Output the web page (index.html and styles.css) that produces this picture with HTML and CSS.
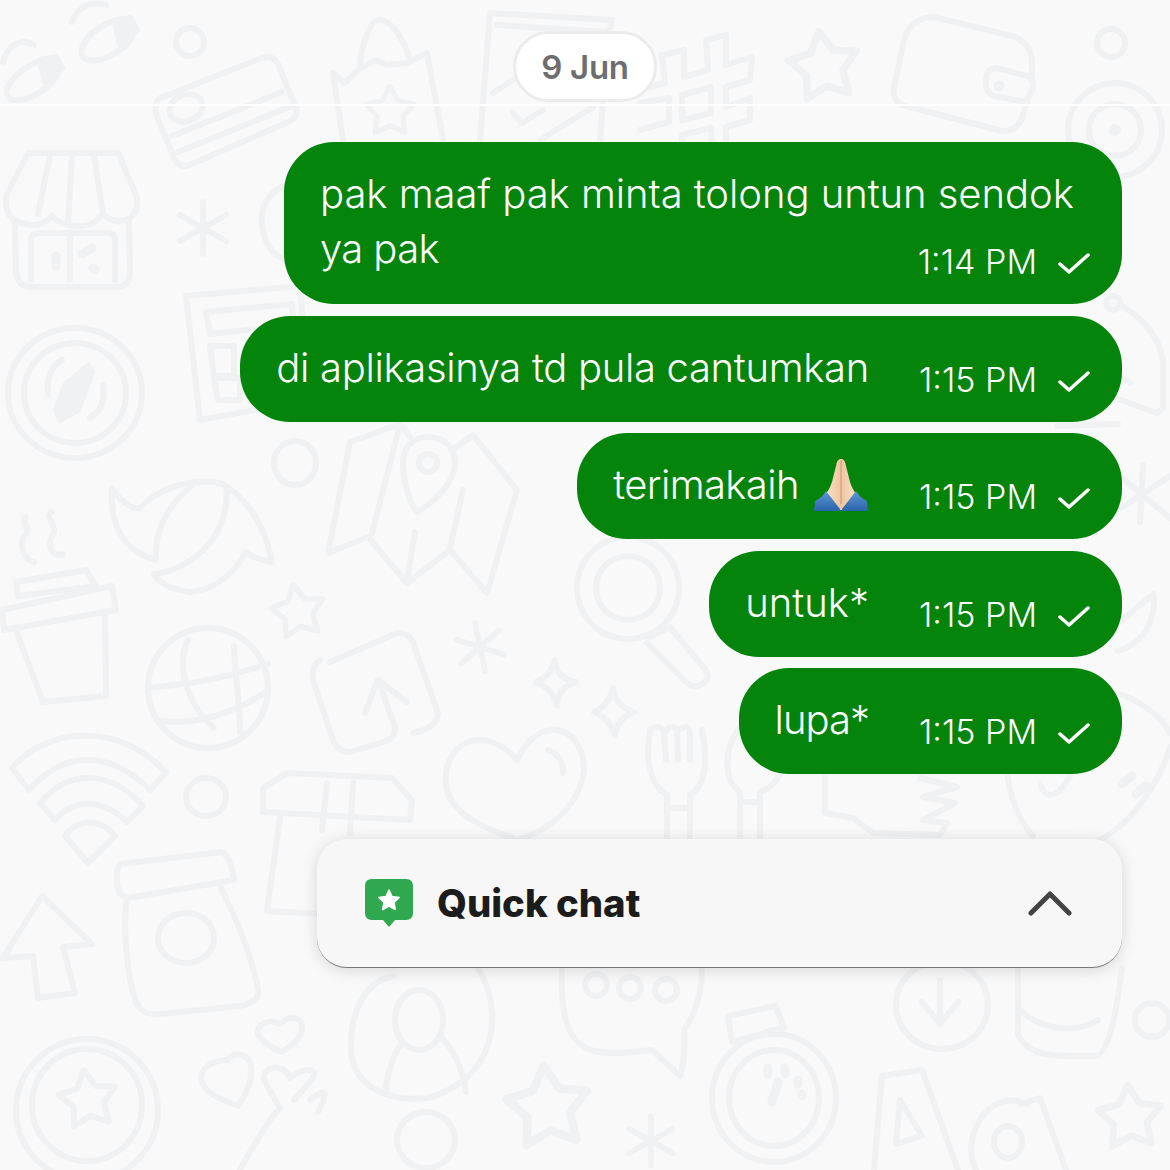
FILE: index.html
```html
<!DOCTYPE html>
<html lang="id">
<head>
<meta charset="utf-8">
<title>Chat</title>
<link rel="stylesheet" href="styles.css">
</head>
<body>
<div class="screen">
  <svg class="wallpaper" viewBox="0 0 1170 1170" aria-hidden="true">
    <defs>
      <path id="star" d="M0-30 9.4-12.9 28.5-9.3 15.2 5 17.6 24.3 0 16-17.6 24.3-15.2 5-28.5-9.3-9.4-12.9Z"/>
      <path id="aster" d="M0-26V26M-23-13 23 13M-23 13 23-13"/>
    </defs>
    <!-- top row -->
    <ellipse cx="33" cy="80" rx="30" ry="14" transform="rotate(-33 33 80)"/>
    <path class="solid" d="M40 60 56 57 62 68 45 82Z"/>
    <path d="M3 62C8 44 22 38 34 45"/>
    <ellipse cx="108" cy="40" rx="30" ry="15" transform="rotate(-33 108 40)"/>
    <path class="solid" d="M115 22 130 18 137 30 120 44Z"/>
    <path d="M72 22C78 6 92 0 106 5"/>
    <circle cx="190" cy="42" r="14"/>
    <path d="M160 98 262 58Q272 54 278 64L296 108Q298 118 288 122L192 164Q180 170 174 158L156 114Q154 102 160 98Z"/>
    <path d="M172 136 282 92M178 152 292 106"/>
    <ellipse cx="186" cy="108" rx="17" ry="13" transform="rotate(-22 186 108)"/>
    <path d="M360 65C362 40 372 18 380 20 392 20 404 40 410 60"/>
    <path d="M333 73 345 83 358 70 375 60 387 65 407 63 427 53 443 140M333 73 343 140"/>
    <use href="#star" transform="translate(390 112) scale(.85)"/>
    <path d="M490 13 612 20 608 37 600 140M490 13 480 140M497 25 607 32M493 93 523 73M513 113 522 123 543 110M540 140 593 107"/>
    <path d="M662 55 684 50V77L708 70 706 40 726 35V65L752 57 750 80 726 87V107L750 98V120L726 127V143M662 55 665 83 640 90M640 103 669 98V122L640 130"/>
    <path d="M682 95 711 87V113L682 120ZM682 143V135L711 128 712 143"/>
    <use href="#star" transform="translate(824 67) scale(1.2) rotate(-8)"/>
    <path d="M934 17C918 17 908 26 904 40L894 88Q892 100 902 105L1002 131Q1016 132 1022 118L1027 102M934 17 1012 36Q1030 42 1032 60V76"/>
    <path d="M996 68 1028 76Q1036 82 1032 90L1026 102 994 96Q984 92 986 78 988 68 996 68Z"/>
    <circle class="solid" cx="999" cy="86" r="2.5"/>
    <circle cx="1111" cy="43" r="14"/>
    <circle cx="1115" cy="130" r="47"/>
    <circle cx="1115" cy="130" r="26"/>
    <circle class="solid" cx="1115" cy="130" r="3"/>
    <!-- left column -->
    <path d="M28 153H118L136 195Q140 210 130 218 116 226 103 214 92 228 76 226 62 226 52 216 42 228 24 224 4 220 6 196Z"/>
    <path d="M50 155 38 214M72 155 68 224M94 155 103 214"/>
    <path d="M15 224 16 272Q18 287 32 287H116Q130 287 130 272L129 222"/>
    <path d="M31 280V240Q31 233 40 233H108Q115 233 115 240V280M70 234V280"/>
    <path class="solid-line" d="M56 256V266M82 254 92 248M93 268 95 270"/>
    <use href="#aster" transform="translate(203 228)"/>
    <path d="M290 184C268 190 260 208 262 224 264 244 274 258 292 262"/>
    <path d="M186 296 300 286 310 400 200 420Z"/>
    <path d="M206 312 292 304 294 325 210 334ZM210 346H234V376H214ZM214 378H240V400H218Z"/>
    <ellipse cx="75" cy="393" rx="67" ry="65"/>
    <ellipse cx="75" cy="393" rx="51" ry="50"/>
    <path d="M62 360C52 365 46 378 48 394M103 385C106 400 100 412 90 418"/>
    <path class="solid" d="M88 366 92 372 78 410 60 420 56 410 66 384Z"/>
    <ellipse cx="295" cy="463" rx="21" ry="22"/>
    <path d="M112 488C124 506 136 510 140 508 150 496 172 484 196 482 220 480 226 486 226 486 256 506 268 540 272 562 260 560 250 556 246 552 236 570 218 590 190 592 176 590 160 586 154 574 174 572 200 560 216 534 226 516 228 496 226 486M112 490C110 530 126 552 156 560 154 530 168 504 196 482"/>
    <path d="M26 517C18 520 34 528 24 536 18 544 24 560 34 562M52 512C42 516 60 526 52 536 46 548 54 558 63 554"/>
    <path d="M16 582 86 570 96 586 18 596ZM2 610 112 586 116 610 4 630Z"/>
    <path d="M16 630 43 702 106 696 105 612"/>
    <use href="#star" transform="translate(298 612) scale(.92) rotate(-10)"/>
    <ellipse cx="208" cy="688" rx="60" ry="60"/>
    <path d="M150 688 182 684C206 682 236 674 268 664M156 720C190 726 230 716 266 692M188 640C176 664 186 704 214 728M234 646C234 668 240 700 240 732"/>
    <path d="M12 768C50 724 124 724 166 773L150 790C110 750 64 750 29 790ZM40 803C70 768 110 770 143 806L127 822C104 800 76 796 55 820ZM65 836C78 818 100 818 115 836L88 863Z"/>
    <ellipse cx="206" cy="797" rx="20" ry="19"/>
    <path d="M120 864 222 852Q230 856 234 880L128 898Q117 896 117 880 117 866 120 864Z"/>
    <path d="M127 898C122 930 128 980 136 1002 140 1012 150 1015 160 1014L240 1006C256 1002 260 996 258 988 250 950 236 918 221 888"/>
    <ellipse cx="186" cy="938" rx="28" ry="25"/>
    <path d="M42 896 3 958 33 956 38 998 75 993 63 947 92 944Z"/>
    <ellipse cx="87" cy="1110" rx="71" ry="71"/>
    <ellipse cx="87" cy="1105" rx="55" ry="56"/>
    <use href="#star" transform="translate(88 1100) rotate(-8)"/>
    <path d="M228 1060C214 1060 198 1068 202 1082 206 1094 222 1100 238 1106 248 1092 254 1076 250 1062 244 1052 232 1052 228 1060ZM280 1024C270 1018 256 1024 258 1034 262 1042 272 1048 282 1052 294 1044 304 1036 302 1024 298 1016 288 1016 280 1024Z"/>
    <path d="M240 1170C256 1140 272 1116 280 1108L264 1080C262 1068 280 1060 290 1078 304 1066 322 1068 310 1082L294 1100M310 1100C326 1088 330 1090 318 1112"/>
    <!-- middle -->
    <path d="M350 442 400 424 410 437M350 442 328 553 368 537 407 583 450 550 487 593 517 490 473 435 455 448M400 425 372 533M415 532 407 580M463 490 450 548"/>
    <path d="M417 512C408 500 403 480 403 463 403 446 414 437 428 437 444 437 455 448 455 463 455 480 438 500 417 512Z"/>
    <circle cx="428" cy="463" r="9"/>
    <circle cx="628" cy="588" r="51"/>
    <circle cx="628" cy="588" r="32"/>
    <path d="M670 627 704 668Q712 678 702 684 692 690 684 680L647 643M650 637 670 627"/>
    <path d="M330 662 397 633Q408 632 413 642L438 713Q438 728 413 733M320 660C312 666 312 672 313 680L333 740Q338 752 350 752L383 742Q396 738 395 727L378 680"/>
    <path d="M365 713 378 680 407 702"/>
    <use href="#aster" transform="translate(480 647) rotate(-12) scale(.95)"/>
    <path d="M555 660C556 672 562 680 576 682 564 686 558 692 557 706 554 694 546 686 536 682 546 678 552 672 555 660ZM613 688C614 700 622 708 634 712 624 716 616 724 615 736 612 724 604 716 594 712 604 708 610 700 613 688Z"/>
    <path d="M517 760C504 744 484 736 468 742 448 750 442 774 448 794 458 818 490 830 517 840 552 830 580 804 584 770 584 748 572 730 553 730 536 730 524 746 517 760ZM548 750C556 752 564 762 563 773"/>
    <path d="M650 730C645 760 650 785 667 795V840M690 795C706 785 708 760 702 730M650 730Q662 722 664 735L666 760M664 735Q670 722 677 730L678 760M678 730Q690 722 690 735V760M667 808H690M690 795V840"/>
    <path d="M742 725C724 745 722 780 740 792V838M760 792C772 788 778 780 782 770M740 802H760M760 792V838"/>
    <path d="M263 788 287 773 392 778 412 800 410 820 263 812ZM327 783 322 830M353 783 350 833M280 817 267 911 360 916"/>
    <!-- right / lower -->
    <path d="M825 777V813L853 818 873 833 940 835 947 823 923 820 955 803 923 797 957 787 920 778"/>
    <path d="M1007 772C1010 796 1018 820 1033 836M1040 783C1044 796 1054 804 1070 776"/>
    <path d="M1120 694C1146 704 1164 720 1170 733M1170 747C1160 780 1136 820 1100 840"/>
    <path class="solid-line" d="M1122 784 1132 776M1136 794 1146 786"/>
    <circle cx="1113" cy="303" r="7"/>
    <path d="M1122 306C1146 320 1160 340 1163 361L1163 408 1157 413 1113 397M1130 383 1118 376M1057 426 1118 424"/>
    <path d="M1143 465 1140 522M1170 476 1118 510M1170 518 1122 478"/>
    <path d="M1120 622 1153 594C1156 610 1150 622 1147 629 1140 640 1130 648 1117 651"/>
    <path d="M394 976C366 980 350 1010 351 1050 354 1090 392 1102 428 1098 476 1084 494 1050 492 1010 490 990 484 978 478 968"/>
    <ellipse cx="419" cy="1020" rx="24" ry="30"/>
    <path d="M400 1046C390 1060 386 1084 386 1090M440 1036C458 1054 464 1078 466 1092"/>
    <ellipse cx="426" cy="1140" rx="29" ry="28"/>
    <path d="M562 968C560 1010 566 1040 590 1050 612 1056 630 1052 652 1050L680 1076C686 1060 684 1036 684 1030 698 1010 702 990 702 968"/>
    <ellipse cx="596" cy="985" rx="11" ry="11"/>
    <ellipse cx="630" cy="988" rx="11" ry="11"/>
    <ellipse cx="666" cy="990" rx="11" ry="11"/>
    <use href="#star" transform="translate(548 1108) scale(1.42) rotate(-6)"/>
    <use href="#aster" transform="translate(651 1141) scale(.95)"/>
    <ellipse cx="774" cy="1098" rx="62" ry="64"/>
    <ellipse cx="774" cy="1098" rx="45" ry="48"/>
    <path d="M728 1016 776 1006 784 1028 732 1042ZM744 1040 772 1030"/>
    <path class="solid-line" d="M768 1068V1074M785 1068V1074M798 1080V1084M802 1094V1096M778 1082C776 1094 772 1098 772 1102"/>
    <path d="M874 1170 882 1076 922 1070 958 1170M900 1100 896 1144 922 1136Z"/>
    <path d="M1028 1104C1004 1094 980 1106 972 1140 970 1152 972 1162 976 1170M1020 1104 1040 1098 1066 1170"/>
    <ellipse cx="1008" cy="1142" rx="14" ry="16"/>
    <use href="#star" transform="translate(1130 1118) scale(1.1) rotate(-4)"/>
    <ellipse cx="942" cy="1005" rx="46" ry="44"/>
    <path d="M940 980V1020M922 1002 940 1024 958 1002"/>
    <path d="M1018 968V1035C1030 1058 1054 1056 1096 1056 1110 1054 1118 1000 1122 968M1020 1010C1040 1030 1076 1034 1098 1020"/>
    <circle cx="1152" cy="1020" r="17"/>
  </svg>

  <main class="chat">
    <div class="date-row"><span class="date-pill">9 Jun</span></div>
    <div class="divider"></div>

    <div class="messages">
      <article class="bubble bubble--long">
        <p class="text text--fine">pak maaf pak minta tolong untun sendok</p>
        <div class="last-row">
          <p class="text text--tight">ya pak</p>
          <div class="meta"><time class="time">1:14 PM</time>
            <svg class="check" viewBox="0 0 32 24"><path d="M2 12 11 20 30 3"/></svg></div>
        </div>
      </article>

      <article class="bubble">
        <p class="text text--snug">di aplikasinya td pula cantumkan</p>
        <div class="meta"><time class="time">1:15 PM</time>
          <svg class="check" viewBox="0 0 32 24"><path d="M2 12 11 20 30 3"/></svg></div>
      </article>

      <article class="bubble">
        <p class="text text--emoji"><span class="text--tight">terimakaih</span>
          <svg class="emoji" viewBox="0 0 56 54" role="img" aria-label="🙏">
            <defs>
              <linearGradient id="sleeve" x1="0" y1="0" x2="0" y2="1">
                <stop offset="0" stop-color="#5f97d4"/>
                <stop offset="1" stop-color="#2a64ad"/>
              </linearGradient>
              <linearGradient id="skin" x1="0" y1="0" x2="1" y2="0">
                <stop offset="0" stop-color="#fbe3cb"/>
                <stop offset=".5" stop-color="#eec5a0"/>
                <stop offset="1" stop-color="#fbe3cb"/>
              </linearGradient>
            </defs>
            <path class="emoji-skin" d="M28 1C25 1 24 3 23 8L19 24C17 30 15 33 12 37L26 52H30L44 37C41 33 39 30 37 24L33 8C32 3 31 1 28 1Z"/>
            <path class="emoji-line" d="M28 3V46"/>
            <path class="emoji-sleeve" d="M1 53 2 43Q9 40 13 33L27 51V53ZM55 53 54 43Q47 40 43 33L29 51V53Z"/>
          </svg>
        </p>
        <div class="meta"><time class="time">1:15 PM</time>
          <svg class="check" viewBox="0 0 32 24"><path d="M2 12 11 20 30 3"/></svg></div>
      </article>

      <article class="bubble">
        <p class="text">untuk*</p>
        <div class="meta"><time class="time">1:15 PM</time>
          <svg class="check" viewBox="0 0 32 24"><path d="M2 12 11 20 30 3"/></svg></div>
      </article>

      <article class="bubble">
        <p class="text text--narrow">lupa*</p>
        <div class="meta"><time class="time">1:15 PM</time>
          <svg class="check" viewBox="0 0 32 24"><path d="M2 12 11 20 30 3"/></svg></div>
      </article>
    </div>

    <section class="quick-chat">
      <svg class="quick-icon" viewBox="0 0 48 48">
        <path class="quick-icon-bg" d="M7 0H41Q48 0 48 7V34Q48 41 41 41H30L25 47Q24 48 23 47L18 41H7Q0 41 0 34V7Q0 0 7 0Z"/>
        <path class="quick-icon-star" d="M24 11 27 17.6 34.2 18.5 29 23.5 30.3 30.6 24 27.1 17.7 30.6 19 23.5 13.8 18.5 21 17.6Z"/>
      </svg>
      <h2 class="quick-title">Quick chat</h2>
      <svg class="chevron" viewBox="0 0 44 26"><path d="M3 23 22 4 41 23"/></svg>
    </section>
  </main>
</div>
</body>
</html>
```

FILE: styles.css
```css
* { box-sizing: border-box; }

html, body { margin: 0; padding: 0; }

body {
  background: #f9f9fa;
  font-family: Inter, "Liberation Sans", sans-serif;
}

.screen {
  position: relative;
  width: 1170px;
  height: 1170px;
  overflow: hidden;
  background: #f9f9fa;
}

.wallpaper {
  position: absolute;
  inset: 0;
  width: 1170px;
  height: 1170px;
  fill: none;
  stroke: #f0f1f3;
  stroke-width: 6;
  stroke-linecap: round;
  stroke-linejoin: round;
}

.wallpaper .solid { fill: #f0f1f3; }
.wallpaper .solid-line { stroke-width: 9; }

.chat {
  position: relative;
  display: flex;
  flex-direction: column;
}

.date-row {
  display: flex;
  justify-content: center;
  padding-top: 31px;
}

.date-pill {
  display: flex;
  align-items: center;
  justify-content: center;
  width: 144px;
  height: 71px;
  border: 3px solid #ececed;
  border-radius: 36px;
  background: #fff;
  color: #6e6e70;
  font-size: 33px;
  font-weight: 600;
  letter-spacing: -0.3px;
}

.divider {
  height: 2px;
  margin-top: 2px;
  background: #fff;
}

.messages {
  display: flex;
  flex-direction: column;
  align-items: flex-end;
  gap: 11.5px;
  margin-top: 36px;
  padding-right: 48px;
}

.bubble {
  display: flex;
  align-items: flex-start;
  gap: 49px;
  height: 106px;
  padding: 24px 32px 28px 36px;
  border-radius: 50px;
  background: #04840b;
  color: #fff;
}

.bubble--long {
  display: block;
  width: 838px;
  height: 162px;
}

.last-row {
  display: flex;
  align-items: flex-end;
  justify-content: space-between;
}

.text {
  margin: 0;
  font-size: 40px;
  font-weight: 300;
  line-height: 55px;
  white-space: nowrap;
}

.text--fine { letter-spacing: -0.05px; }
.text--snug { letter-spacing: -0.32px; }
.text--tight { letter-spacing: -0.6px; }
.text--narrow { letter-spacing: -1px; }

.text--emoji {
  display: flex;
  align-items: center;
  gap: 14px;
}

.meta {
  display: flex;
  flex: none;
  align-items: center;
  align-self: flex-end;
  gap: 21px;
  height: 40px;
  margin-bottom: -6px;
  padding-left: 1px;
}

.time {
  font-size: 34px;
  font-weight: 300;
  line-height: 40px;
  white-space: nowrap;
}

.check {
  width: 32px;
  height: 24px;
  margin-top: 4px;
  fill: none;
  stroke: #fff;
  stroke-width: 3.5;
  stroke-linecap: round;
  stroke-linejoin: round;
}

.emoji {
  flex: none;
  width: 56px;
  height: 54px;
}

.emoji-sleeve { fill: url(#sleeve); }
.emoji-skin { fill: url(#skin); }
.emoji-line { fill: none; stroke: #c9996f; stroke-width: 1; }

.quick-chat {
  display: flex;
  align-items: center;
  align-self: flex-end;
  width: 805px;
  height: 129px;
  margin: 65px 48px 0 0;
  padding: 0 50px 0 48px;
  border-bottom: 1px solid #77787a;
  border-radius: 30px;
  background: #f7f7f7;
  box-shadow: 0 2px 16px rgba(0, 0, 0, 0.14);
}

.quick-icon { flex: none; width: 48px; height: 48px; }
.quick-icon-bg { fill: #2fa84f; }
.quick-icon-star { fill: #fff; stroke: #fff; stroke-width: 1.5; stroke-linejoin: round; }

.quick-title {
  flex: 1;
  margin: 0 0 0 24px;
  color: #1c1c1c;
  font-size: 38.3px;
  font-weight: 800;
}

.chevron {
  flex: none;
  width: 44px;
  height: 26px;
  fill: none;
  stroke: #444;
  stroke-width: 5;
  stroke-linecap: round;
  stroke-linejoin: round;
}
```
